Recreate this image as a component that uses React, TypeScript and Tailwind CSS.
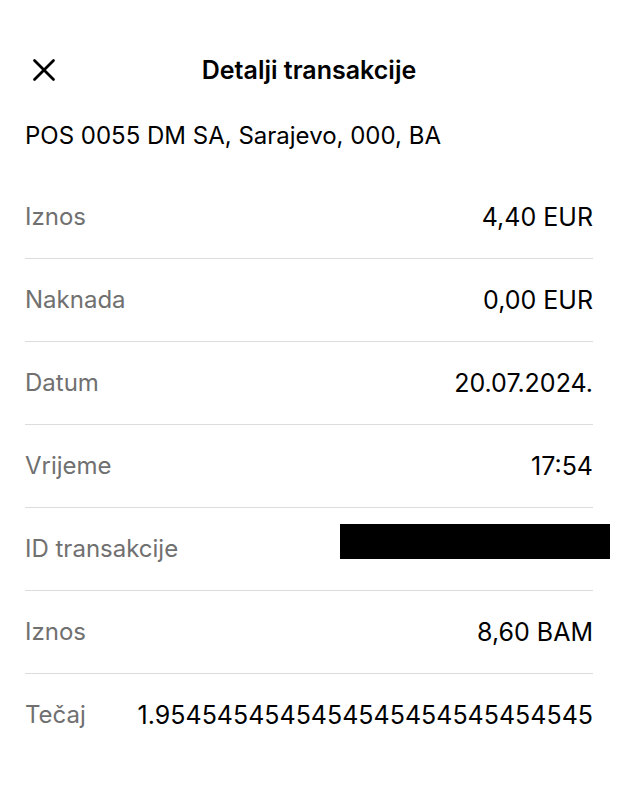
import { X } from "lucide-react";

type Detail = {
  label: string;
  value: string;
  hidden?: boolean;
};

const details: Detail[] = [
  { label: "Iznos", value: "4,40 EUR" },
  { label: "Naknada", value: "0,00 EUR" },
  { label: "Datum", value: "20.07.2024." },
  { label: "Vrijeme", value: "17:54" },
  { label: "ID transakcije", value: "", hidden: true },
  { label: "Iznos", value: "8,60 BAM" },
  { label: "Tečaj", value: "1.9545454545454545454545454545" },
];

function DetailRow({ label, value, hidden }: Detail) {
  return (
    <div className="flex h-[83px] items-center justify-between border-b border-[#dcdcdc] last:border-transparent">
      <dt className="text-[24px] text-[#707070]">{label}</dt>
      {hidden ? (
        // the redaction bar runs past the right edge of the list
        <dd className="-mr-[17px] mb-4 h-[35px] w-[270px] bg-black" />
      ) : (
        <dd className="text-[25px]">{value}</dd>
      )}
    </div>
  );
}

export default function App() {
  return (
    <main className="min-h-screen bg-white px-[25px] pt-12 font-['Inter',sans-serif] leading-8 text-black">
      <header className="grid grid-cols-[44px_1fr_44px] items-center">
        <button type="button" aria-label="Zatvori" className="flex h-11 items-center">
          <X size={38} strokeWidth={1.75} />
        </button>
        <h1 className="text-center text-[25px] font-semibold">Detalji transakcije</h1>
      </header>
      <p className="mt-7 text-[24px]">POS 0055 DM SA, Sarajevo, 000, BA</p>
      <dl className="mt-6">
        {details.map((detail, i) => (
          <DetailRow key={i} {...detail} />
        ))}
      </dl>
    </main>
  );
}
